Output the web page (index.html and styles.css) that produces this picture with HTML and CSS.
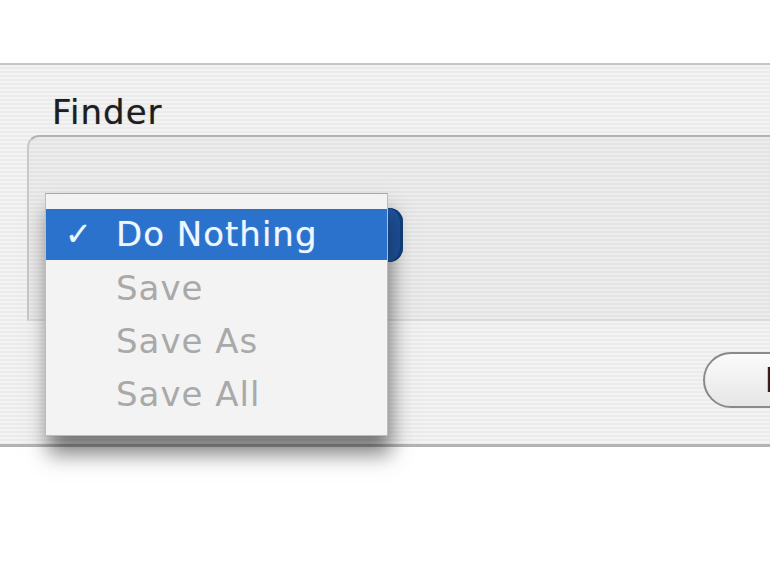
FILE: index.html
```html
<!DOCTYPE html>
<html lang="en">
<head>
  <meta charset="UTF-8">
  <meta name="viewport" content="width=device-width, initial-scale=1.0">
  <title>Finder</title>
  <link rel="stylesheet" href="styles.css">
</head>
<body>
  <div class="top"></div>

  <!-- window body -->
  <div class="window">
    <div class="label">Finder</div>
    <div class="group">
      <div class="popup"></div>
    </div>
    <div class="actions">
      <button class="btn">Done</button>
    </div>

    <!-- open popup menu -->
    <ul class="menu">
      <li class="item selected"><span class="check">✓</span>Do Nothing</li>
      <li class="item disabled">Save</li>
      <li class="item disabled">Save As</li>
      <li class="item disabled">Save All</li>
    </ul>
  </div>
</body>
</html>
```

FILE: styles.css
```css
html, body { margin: 0; background: #fff; overflow: hidden; }
body { font-family: "DejaVu Sans", "Liberation Sans", sans-serif; width: 770px; height: 578px; }
.top { height: 63px; }
.window {
  position: relative;
  height: 379px;
  border-top: 2px solid #c6c6c6;
  border-bottom: 3px solid #b4b4b4;
  background: repeating-linear-gradient(to bottom, #f3f3f3 0 2px, #ebebeb 2px 4px);
}
.label { font-size: 34px; letter-spacing: 1px; color: #1e1e1e; padding: 25px 0 0 52px; height: 45px; line-height: 45px; text-shadow: 0 0 1px rgba(0,0,0,0.4); }
.group {
  margin: 0 -20px 0 27px;
  border-top: 2px solid #b2b2b2;
  border-left: 2px solid #c9c9c9;
  border-bottom: 2px solid #dadada;
  border-top-left-radius: 12px;
  background: repeating-linear-gradient(to bottom, #ececec 0 2px, #e4e4e4 2px 4px);
  padding: 71px 0 0 16px;
  box-sizing: border-box;
  height: 186px;
}
.popup {
  width: 358px;
  height: 54px;
  border-radius: 0 14px 14px 0;
  background: linear-gradient(to right, #2a72cc 90%, #1d4f9a);
  box-shadow: inset -3px 0 0 #12407f;
}
.actions { display: flex; justify-content: flex-end; padding-top: 31px; margin-right: -126px; }
.btn {
  font: inherit;
  font-size: 34px;
  color: #1e1e1e;
  height: 56px;
  padding: 0 40px 0 60px;
  border: 2px solid #8a8a8a;
  border-radius: 28px;
  background: linear-gradient(to bottom, #fbfbfb, #e6e6e6);
  line-height: 50px;
}
.menu {
  position: absolute;
  left: 45px;
  top: 128px;
  width: 341px;
  margin: 0;
  padding: 15px 0 14px;
  list-style: none;
  background: #f3f3f3;
  border: 1px solid #bcbcbc;
  border-top-color: #a8a8a8;
  box-shadow: 3px 18px 20px rgba(0, 0, 0, 0.5);
}
.item { position: relative; height: 53px; line-height: 53px; font-size: 34px; letter-spacing: 1px; padding-left: 70px; color: #1e1e1e; }
.item.selected { background: #2a72cc; color: #eef6ff; height: 51px; line-height: 51px; margin-bottom: 2px; text-shadow: 0 0 1px rgba(255,255,255,0.5); }
.item.disabled { color: #a9a9a9; }
.check { position: absolute; left: 19px; font-size: 32px; font-weight: bold; }
```
